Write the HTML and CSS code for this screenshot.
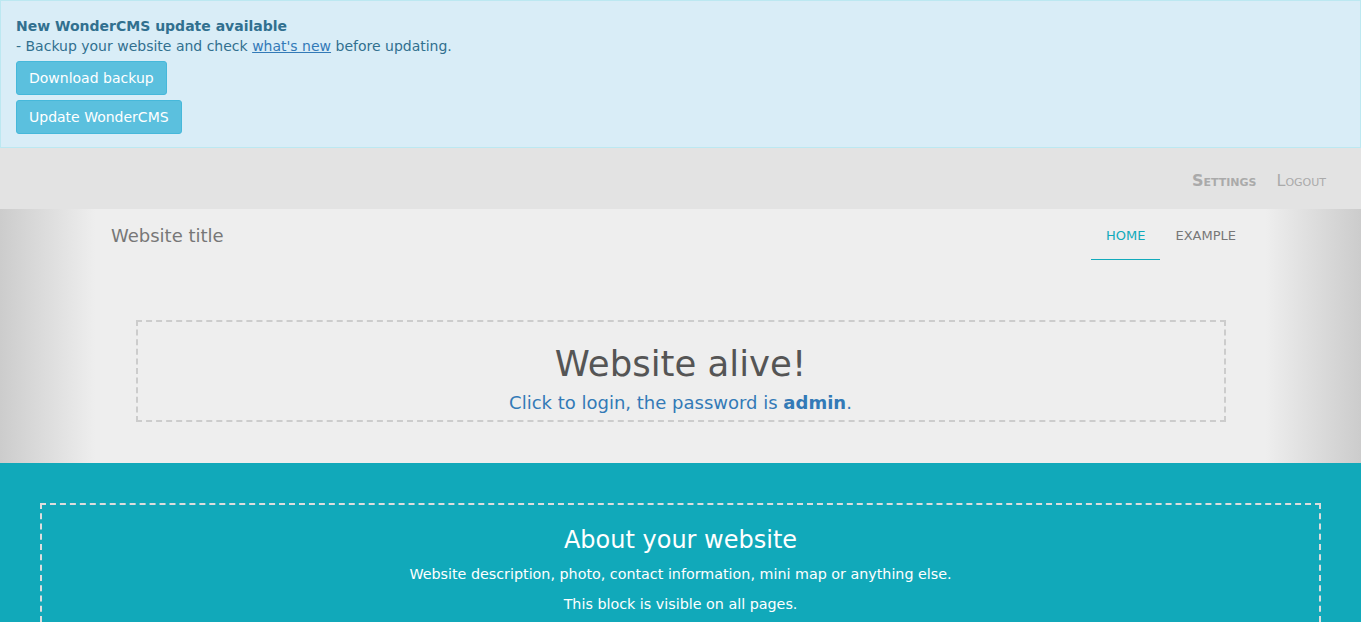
FILE: index.html
```html
<!DOCTYPE html>
<html>
<head>
<meta charset="utf-8">
<link rel="stylesheet" href="styles.css">
</head>
<body>
<div class="alert">
  <div class="alert-title">New WonderCMS update available</div>
  <div class="alert-text">- Backup your website and check <a href="#">what's new</a> before updating.</div>
  <a class="btn" href="#">Download backup</a>
  <a class="btn" href="#">Update WonderCMS</a>
</div>
<div class="adminbar">
  <a class="admin-link bold" href="#">Settings</a>
  <a class="admin-link" href="#">Logout</a>
</div>
<div class="header">
  <div class="nav">
    <div class="brand">Website title</div>
    <ul class="menu">
      <li class="item active">HOME</li>
      <li class="item">EXAMPLE</li>
    </ul>
  </div>
  <div class="content-box">
    <h1 class="main-title">Website alive!</h1>
    <p class="login">Click to login, the password is <b>admin</b>.</p>
  </div>
</div>
<div class="footer">
  <div class="footer-box">
    <h2 class="about-title">About your website</h2>
    <p class="about-text">Website description, photo, contact information, mini map or anything else.</p>
    <p class="about-text">This block is visible on all pages.</p>
  </div>
</div>
</body>
</html>
```

FILE: styles.css
```css
html, body {
  margin: 0;
  padding: 0;
}
body {
  font-family: "DejaVu Sans", Verdana, sans-serif;
  font-size: 14px;
  line-height: 20px;
  background: #eeeeee;
  overflow: hidden;
  height: 622px;
}
.alert {
  background: #d9edf7;
  border: 1px solid #bce8f1;
  color: #31708f;
  padding: 15px 15px 13px;
  display: flex;
  flex-direction: column;
  align-items: flex-start;
  font-size: 14px;
}
.alert-title {
  font-weight: bold;
  font-size: 14px;
}
.alert-text a {
  color: #337ab7;
  text-decoration: underline;
}
.btn {
  display: inline-block;
  margin-top: 5px;
  padding: 6px 12px;
  font-size: 14px;
  line-height: 20px;
  color: #fff;
  background: #5bc0de;
  border: 1px solid #46b8da;
  border-radius: 3px;
  text-decoration: none;
}
.adminbar {
  background: #e3e3e3;
  height: 61px;
  box-sizing: border-box;
  padding-top: 4px;
  display: flex;
  justify-content: flex-end;
  align-items: center;
  gap: 20px;
  padding-right: 35px;
}
.admin-link {
  font-variant: small-caps;
  color: #aaaaaa;
  text-decoration: none;
  font-size: 16px;
}
.admin-link.bold {
  font-weight: bold;
}
.header {
  background: linear-gradient(to right, #cccccc 0, #eeeeee 7%, #eeeeee 93%, #cccccc 100%);
  height: 254px;
  box-sizing: border-box;
}
.nav {
  width: 1140px;
  margin: 0 0 0 111px;
  display: flex;
  justify-content: space-between;
  align-items: flex-start;
}
.brand {
  font-size: 18px;
  color: #777777;
  padding-top: 17px;
}
.menu {
  list-style: none;
  margin: 0;
  padding: 0;
  display: flex;
}
.item {
  font-size: 13px;
  color: #777777;
  padding: 17px 15px 0;
  height: 33px;
}
.item.active {
  color: #1ab;
  border-bottom: 1px solid #1ab;
}
.content-box {
  width: 1090px;
  margin: 60px auto 0;
  box-sizing: border-box;
  border: 2px dashed #cccccc;
  text-align: center;
  height: 102px;
  padding-top: 17px;
}
.main-title {
  margin: 0;
  font-size: 35.5px;
  line-height: 50px;
  font-weight: normal;
  color: #555555;
}
.login {
  margin: 2px 0 0;
  color: #337ab7;
  font-size: 18px;
  line-height: 24px;
}
.footer {
  background: #11a9ba;
  padding: 40px 40px 0;
  height: 159px;
  box-sizing: border-box;
}
.footer-box {
  border: 2px dashed #dddddd;
  border-bottom: none;
  text-align: center;
  color: #ffffff;
  padding-top: 18px;
  height: 119px;
  box-sizing: border-box;
}
.about-title {
  margin: 0 0 7px;
  font-size: 24px;
  line-height: 34px;
  font-weight: normal;
}
.about-text {
  margin: 0 0 10px;
  font-size: 14.3px;
  line-height: 20px;
}
```
